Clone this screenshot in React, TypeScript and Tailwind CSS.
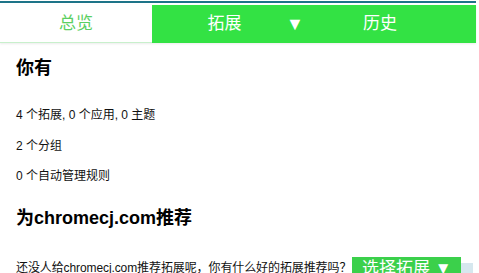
export default function App() {
  const font = { fontFamily: '"Liberation Sans", "Noto Sans CJK SC", sans-serif' };
  return (
    <div className="w-[479px] h-[273px] overflow-hidden bg-white" style={font}>
      <div className="w-[476px] mt-[1px] border-t-2 border-[#1d7488]">
        <div className="mt-[2px] flex h-[38px] bg-[#33e244] shadow-[0_1px_2px_rgba(0,0,0,0.08)]">
          <div className="w-[152px] bg-white border-b border-[#c8f0cc] flex items-center justify-center text-[17px] text-[#5bcf62]">
            总览
          </div>
          <div className="w-[152px] relative flex items-center justify-center text-[17px] text-white">
            <span className="mr-[7px]">拓展</span>
            <span className="absolute left-[134px] text-[18px]">▼</span>
          </div>
          <div className="w-[152px] flex items-center justify-center text-[17px] text-white">
            历史
          </div>
        </div>
      </div>
      <div className="pl-[16px] text-[#111]">
        <div className="mt-[13px] text-[18px] font-bold leading-[24px] text-black">你有</div>
        <div className="mt-[27px] text-[12px] leading-[16px]">4 个拓展, 0 个应用, 0 主题</div>
        <div className="mt-[15px] text-[12px] leading-[16px]">2 个分组</div>
        <div className="mt-[14px] text-[12px] leading-[16px]">0 个自动管理规则</div>
        <div className="mt-[22px] text-[18px] font-bold leading-[24px] text-black">为chromecj.com推荐</div>
        <div className="mt-[25px] flex items-start text-[12px]">
          <span className="mt-[5px] leading-[16px] tracking-[-0.1px]">还没人给chromecj.com推荐拓展呢，你有什么好的拓展推荐吗？</span>
          <div className="ml-[1px] mt-[2px] w-[109px] h-[24px] bg-[#3bd04b] text-white text-[17px] flex items-center justify-center leading-[20px]">
            选择拓展 ▼
          </div>
          <div className="mt-[8px] w-[12px] h-[18px] bg-[#d6e7ee]"></div>
        </div>
      </div>
    </div>
  );
}
